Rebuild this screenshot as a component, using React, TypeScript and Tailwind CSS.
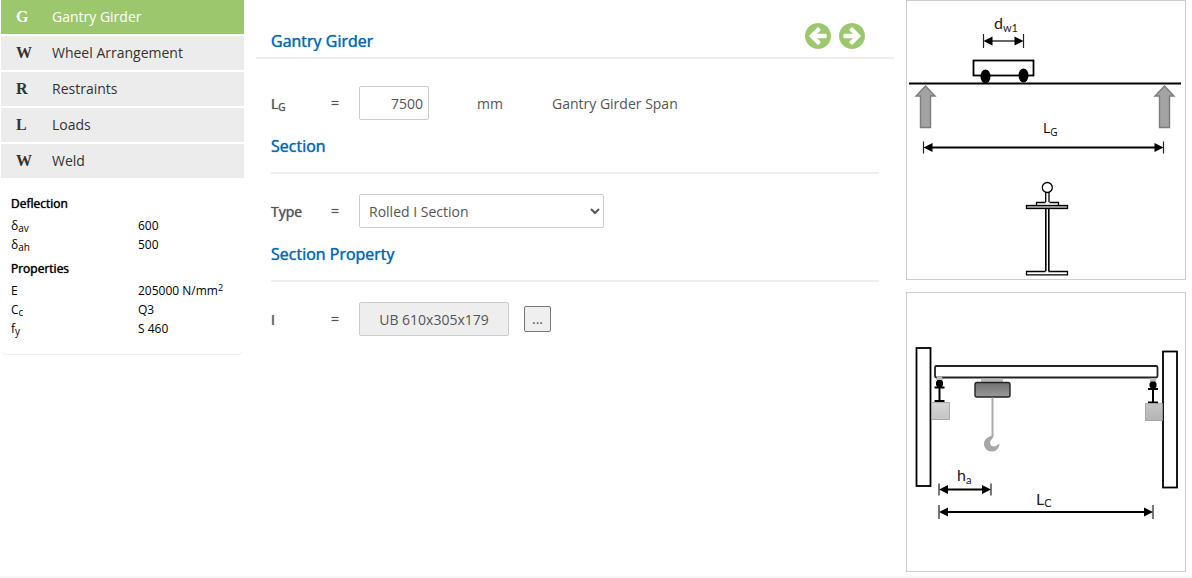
import { useState } from 'react';
import type { ReactNode } from 'react';

const menuItems = [
  { letter: 'G', label: 'Gantry Girder' },
  { letter: 'W', label: 'Wheel Arrangement' },
  { letter: 'R', label: 'Restraints' },
  { letter: 'L', label: 'Loads' },
  { letter: 'W', label: 'Weld' },
];

const ArrowCircle = ({ flip = false }: { flip?: boolean }) => (
  <svg viewBox="0 0 1536 1536" className={`size-[26px] ${flip ? 'rotate-180' : ''}`} fill="currentColor" fillRule="evenodd" aria-hidden="true">
    <path d="M1280 832v-128q0 -26 -19 -45t-45 -19h-502l189 -189q19 -19 19 -45t-19 -45l-91 -91q-18 -18 -45 -18t-45 18l-362 362l-91 91q-18 18 -18 45t18 45l91 91l362 362q18 18 45 18t45 -18l91 -91q18 -18 18 -45t-18 -45l-189 -189h502q26 0 45 -19t19 -45zM1536 768q0 -209 -103 -385.5t-279.5 -279.5t-385.5 -103t-385.5 103t-279.5 279.5t-103 385.5t103 385.5t279.5 279.5t385.5 103t385.5 -103t279.5 -279.5t103 -385.5z" />
  </svg>
);

const Sub = ({ children }: { children: ReactNode }) => (
  <sub className="-bottom-0.5 text-[10px]">{children}</sub>
);

const SummaryTable = ({ title, rows }: { title: string; rows: [ReactNode, ReactNode][] }) => (
  <table className="w-full text-xs text-black">
    <caption className="h-6 text-left leading-6 [text-shadow:0_0_1px_currentColor]">{title}</caption>
    <tbody>
      {rows.map(([name, value], i) => (
        <tr key={i} className="h-[19px] leading-[19px]">
          <th scope="row" className="w-[127px] p-0 text-left font-normal">{name}</th>
          <td className="p-0">{value}</td>
        </tr>
      ))}
    </tbody>
  </table>
);

const SectionHeading = ({ children }: { children: ReactNode }) => (
  <h2 className="flex h-[54px] items-center border-b-2 border-[#eeeeee] text-base text-[#0867b2] [text-shadow:0_0_1px_currentColor]">
    {children}
  </h2>
);

const FieldRow = ({ id, label, children }: { id: string; label: ReactNode; children: ReactNode }) => (
  <div className="flex h-[34px] items-center text-sm text-[#555555]">
    <label htmlFor={id} className="w-15 shrink-0 pt-0.5 [text-shadow:0_0_1px_currentColor]">{label}</label>
    <span className="w-7 shrink-0 [text-shadow:0_0_1px_currentColor]">=</span>
    {children}
  </div>
);

// Dimension line with an arrow head and a tick on both ends
const Dimension = ({ x1, x2, y, tick = 6, width = 2 }: { x1: number; x2: number; y: number; tick?: number; width?: number }) => (
  <g>
    <path d={`M${x1 + 6} ${y}H${x2 - 6}`} stroke="#000" strokeWidth={width} />
    <path d={`M${x1} ${y}l9 -4.5v9zM${x2} ${y}l-9 -4.5v9z`} fill="#000" />
    <path d={`M${x1} ${y - tick}v${tick * 2}M${x2} ${y - tick}v${tick * 2}`} stroke="#222" strokeWidth="1.2" />
  </g>
);

const GirderDiagram = () => (
  <svg viewBox="0 0 278 278" className="block w-full" role="img" aria-label="Gantry girder span">
    <text x="87" y="28" fontSize="16" fill="#222" className="font-['Lato']">
      d<tspan fontSize="11" dy="3">w1</tspan>
    </text>
    <Dimension x1={76.5} x2={116.5} y={40} tick={7} width={1.2} />
    <rect x="66.5" y="59.5" width="60" height="15" fill="#fff" stroke="#000" strokeWidth="1.8" />
    <ellipse cx="78.5" cy="75.5" rx="5" ry="7" />
    <ellipse cx="116.5" cy="74.5" rx="5" ry="7" />
    <path d="M2 82.5H274" stroke="#000" strokeWidth="2" />
    <g fill="#a3a3a3" stroke="#7c7c7c" strokeWidth="1.4">
      <path d="M18.5 85l9.5 10h-4.5v31.5h-10v-31.5h-4.5z" />
      <path d="M257.5 85l9.5 10h-4.5v31.5h-10v-31.5h-4.5z" />
    </g>
    <text x="136" y="132" fontSize="14" fill="#000">
      L<tspan fontSize="10" dy="3">G</tspan>
    </text>
    <Dimension x1={16.5} x2={256.5} y={146.5} />
    {/* Rail and I section */}
    <g fill="#fff" stroke="#000" strokeWidth="1.3">
      <path d="M138.7 191v10.5M142 191v10.5" />
      <circle cx="140.3" cy="186.5" r="5" />
      <path d="M138.5 201.5h-9v3.5h22v-3.5h-9" />
      <rect x="119.5" y="204.5" width="41" height="3" fill="#aaa" />
      <path d="M138.8 208v62.5M141.8 208v62.5" strokeWidth="1.6" />
      <path d="M138.5 270.5h-19v3.3h41v-3.3h-19" />
    </g>
  </svg>
);

const RailSupport = ({ x, y }: { x: number; y: number }) => (
  <g transform={`translate(${x} ${y})`}>
    <path d="M-2.5 -1h5l1 4h-7z" fill="#bbb" />
    <path d="M-2 2.5h4l1.5 2v3l-1 1.500h2.500v2h-10v-2h2.500l-1 -1.500v-3zM-1 11h2v12h-2zM-5 22.5h10v2h-10z" fill="#000" />
  </g>
);

const CraneDiagram = () => (
  <svg viewBox="0 0 278 278" className="block w-full" role="img" aria-label="Crane span and hook approach">
    <defs>
      <linearGradient id="hoist" x1="0" y1="0" x2="0" y2="1">
        <stop offset="0" stopColor="#707070" />
        <stop offset="1" stopColor="#9a9a9a" />
      </linearGradient>
      <linearGradient id="bracket" x1="0" y1="0" x2="1" y2="1">
        <stop offset="0" stopColor="#d6d6d6" />
        <stop offset="1" stopColor="#b4b4b4" />
      </linearGradient>
    </defs>
    <g fill="#fff" stroke="#000" strokeWidth="1.8">
      <rect x="9.5" y="55" width="14" height="138" />
      <rect x="256" y="58.5" width="14" height="136" />
      <rect x="28" y="73" width="222.5" height="11.5" rx="1.5" stroke="#222" />
    </g>
    <path d="M74 85.5h22v4h-22z" fill="#bbb" />
    <rect x="68" y="89.5" width="35" height="14.5" rx="2" fill="url(#hoist)" stroke="#222" strokeWidth="1.4" />
    <path d="M85.5 104.500v38.5" stroke="#aaa" strokeWidth="2" />
    <path d="M86.5 142.5c-5.5 .5-9.500 4-9.500 8.500c0 4.500 3.500 7.500 8 7.500c4.500 0 7-3.500 7.500-8c-2 1.500-3.500 3-5.500 3c-3 0-4.500-3-3.500-5.500c.7-2 3-2.500 3-5.500z" fill="#a6a6a6" />
    <RailSupport x={32.5} y={84.5} />
    <RailSupport x={246} y={86} />
    <path d="M24.5 109.5h18v17h-18zM238.5 110.5h17v17h-17z" fill="url(#bracket)" stroke="#999" strokeWidth="0.8" />
    <text x="50" y="188" fontSize="16" fill="#222" className="font-['Lato']">
      h<tspan fontSize="11" dy="3">a</tspan>
    </text>
    <Dimension x1={32} x2={84} y={196.5} />
    <text x="129" y="212" fontSize="16" fill="#222" className="font-['Lato']">
      L<tspan fontSize="11" dy="2">C</tspan>
    </text>
    <Dimension x1={32} x2={246} y={219} tick={7} />
  </svg>
);

export default function App() {
  const [active, setActive] = useState(0);
  const [span, setSpan] = useState('7500');
  const [sectionType, setSectionType] = useState('Rolled I Section');

  return (
    <div className="flex min-h-screen items-start border-b-2 border-[#f7f7f7] bg-white pr-1.5 font-['Open_Sans','Noto_Sans',sans-serif]">
      {/* Sidebar */}
      <aside className="w-61 shrink-0 rounded-md border-b border-[#eeeeee]">
        <nav className="flex flex-col gap-0.5 pl-px">
          {menuItems.map((item, i) => (
            <button
              key={i}
              type="button"
              onClick={() => setActive(i)}
              className={`flex h-[34px] items-center pl-[15px] text-left text-sm ${
                i === active ? 'bg-[#9cc76d] text-white' : 'bg-[#ececec] text-[#333333]'
              }`}
            >
              <span className="w-9 font-['Liberation_Serif',serif] text-base font-bold">{item.letter}</span>
              {item.label}
            </button>
          ))}
        </nav>
        <div className="flex flex-col gap-[3px] px-[11px] pt-3.5 pb-4">
          <SummaryTable
            title="Deflection"
            rows={[
              [<>δ<Sub>av</Sub></>, '600'],
              [<>δ<Sub>ah</Sub></>, '500'],
            ]}
          />
          <SummaryTable
            title="Properties"
            rows={[
              ['E', <>205000 N/mm<sup className="text-[9px]">2</sup></>],
              [<>C<Sub>c</Sub></>, 'Q3'],
              [<>f<Sub>y</Sub></>, 'S 460'],
            ]}
          />
        </div>
      </aside>

      {/* Form */}
      <main className="mx-3 min-w-0 flex-1">
        <header className="flex h-[59px] items-end justify-between border-b-2 border-[#eeeeee] px-[15px] pb-1">
          <h1 className="text-base text-[#0867b2] [text-shadow:0_0_1px_currentColor]">Gantry Girder</h1>
          <div className="flex gap-2 pr-3.5 pb-1 text-[#9cc76d]">
            <button type="button" aria-label="Previous"><ArrowCircle /></button>
            <button type="button" aria-label="Next"><ArrowCircle flip /></button>
          </div>
        </header>
        <form className="px-[15px] pt-[27px]" onSubmit={(e) => e.preventDefault()}>
          <FieldRow id="span" label={<>L<Sub>G</Sub></>}>
            <div className="w-[118px]">
              <input
                id="span"
                value={span}
                onChange={(e) => setSpan(e.target.value)}
                className="block h-[34px] w-[70px] rounded-xs border border-[#cccccc] px-[5px] text-right"
              />
            </div>
            <span className="w-[75px] pt-0.5">mm</span>
            <span className="pt-0.5">Gantry Girder Span</span>
          </FieldRow>
          <SectionHeading>Section</SectionHeading>
          <div className="pt-5">
            <FieldRow id="type" label="Type">
              <select
                id="type"
                value={sectionType}
                onChange={(e) => setSectionType(e.target.value)}
                className="h-[34px] w-[245px] rounded-xs border border-[#cccccc] bg-white px-[5px]"
              >
                <option>Rolled I Section</option>
              </select>
            </FieldRow>
          </div>
          <SectionHeading>Section Property</SectionHeading>
          <div className="pt-5">
            <FieldRow id="profile" label="I">
              <input
                id="profile"
                value="UB 610x305x179"
                readOnly
                className="h-[34px] w-[150px] rounded-xs border border-[#cccccc] bg-[#eeeeee] text-center"
              />
              <button type="button" aria-label="Choose section" className="ml-[15px] h-[26px] w-[27px] rounded-xs border border-[#767676] bg-[#efefef] text-sm leading-5">
                ...
              </button>
            </FieldRow>
          </div>
        </form>
      </main>

      {/* Diagrams */}
      <aside className="flex w-[280px] shrink-0 flex-col gap-3">
        <div className="border border-[#cccccc]"><GirderDiagram /></div>
        <div className="border border-[#cccccc]"><CraneDiagram /></div>
      </aside>
    </div>
  );
}
